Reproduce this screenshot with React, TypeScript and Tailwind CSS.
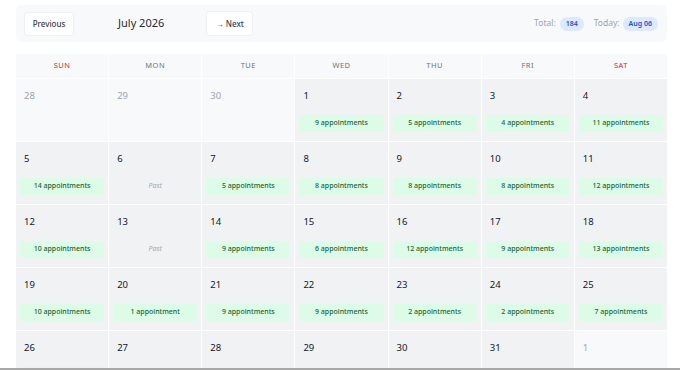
const days = ['SUN', 'MON', 'TUE', 'WED', 'THU', 'FRI', 'SAT'];

type Cell = { day: number; outside?: boolean; count?: number; past?: boolean };

const cells: Cell[] = [
  { day: 28, outside: true },
  { day: 29, outside: true },
  { day: 30, outside: true },
  { day: 1, count: 9 },
  { day: 2, count: 5 },
  { day: 3, count: 4 },
  { day: 4, count: 11 },
  { day: 5, count: 14 },
  { day: 6, past: true },
  { day: 7, count: 5 },
  { day: 8, count: 8 },
  { day: 9, count: 8 },
  { day: 10, count: 8 },
  { day: 11, count: 12 },
  { day: 12, count: 10 },
  { day: 13, past: true },
  { day: 14, count: 9 },
  { day: 15, count: 6 },
  { day: 16, count: 12 },
  { day: 17, count: 9 },
  { day: 18, count: 13 },
  { day: 19, count: 10 },
  { day: 20, count: 1 },
  { day: 21, count: 9 },
  { day: 22, count: 9 },
  { day: 23, count: 2 },
  { day: 24, count: 2 },
  { day: 25, count: 7 },
  { day: 26, count: 3 },
  { day: 27 },
  { day: 28 },
  { day: 29 },
  { day: 30 },
  { day: 31 },
  { day: 1, outside: true },
];

function DayCell({ cell }: { cell: Cell }) {
  return (
    <div
      className={`h-[62px] flex flex-col px-[4px] pt-[10px] ${
        cell.outside ? 'bg-[#f8f9fa]' : 'bg-[#f1f2f4]'
      }`}
    >
      <span
        className={`pl-[4px] text-[9.5px] leading-[13px] ${
          cell.outside ? 'text-[#9ca3af]' : 'text-[#111827]'
        }`}
      >
        {cell.day}
      </span>
      {cell.count !== undefined && (
        <div className="mt-[13px] h-[17px] rounded-[2px] bg-[#dcfce7] flex items-center justify-center text-[7px] font-medium text-[#166534]">
          {cell.count === 1 ? '1 appointment' : `${cell.count} appointments`}
        </div>
      )}
      {cell.past && (
        <div className="mt-[13px] h-[17px] flex items-center justify-center text-[7px] italic text-[#a3a8b0]">
          Past
        </div>
      )}
    </div>
  );
}

export default function App() {
  return (
    <div
      className="w-[680px] h-[370px] flex flex-col overflow-hidden bg-white"
      style={{ fontFamily: '"Noto Sans", "Open Sans", sans-serif' }}
    >
      <div className="flex-1 overflow-hidden">
        <div className="mx-[16px] w-[651px]">
          <div className="mt-[5px] h-[37px] rounded-[6px] bg-[#f8f9fa] flex items-center pl-[9px] pr-[9px]">
            <button className="h-[22px] w-[48px] rounded-[3px] bg-white shadow-[0_0_0_1px_#eef0f2] text-[8px] font-medium text-[#374151]">
              Previous
            </button>
            <span className="ml-[45px] text-[11px] text-[#1f2937]">July 2026</span>
            <button className="ml-[43px] h-[23px] w-[45px] rounded-[3px] bg-white shadow-[0_0_0_1px_#eef0f2] text-[8px] font-medium text-[#374151]">
              → Next
            </button>
            <div className="ml-auto flex items-center text-[8.5px] text-[#9ca3af]">
              <span>Total:</span>
              <span className="ml-[4px] rounded-full bg-[#dbeafe] px-[6px] py-[3px] text-[7px] leading-[8px] font-semibold text-[#1d4ed8]">
                184
              </span>
              <span className="ml-[10px]">Today:</span>
              <span className="ml-[3px] rounded-full bg-[#dbeafe] px-[6px] py-[3px] text-[7px] leading-[8px] font-semibold text-[#1d4ed8]">
                Aug 06
              </span>
            </div>
          </div>

          <div className="mt-[12px] grid grid-cols-7 gap-px bg-white">
            {days.map((d, i) => (
              <div
                key={d}
                className={`h-[24px] bg-[#f8f9fa] flex items-center justify-center text-[7.5px] tracking-[0.5px] ${
                  i === 0 || i === 6 ? 'text-[#dc2626]' : 'text-[#6b7280]'
                }`}
              >
                {d}
              </div>
            ))}
            {cells.map((c, i) => (
              <DayCell key={i} cell={c} />
            ))}
          </div>
        </div>
      </div>
      <div className="h-[2px] bg-[#a8a8a8]" />
    </div>
  );
}
